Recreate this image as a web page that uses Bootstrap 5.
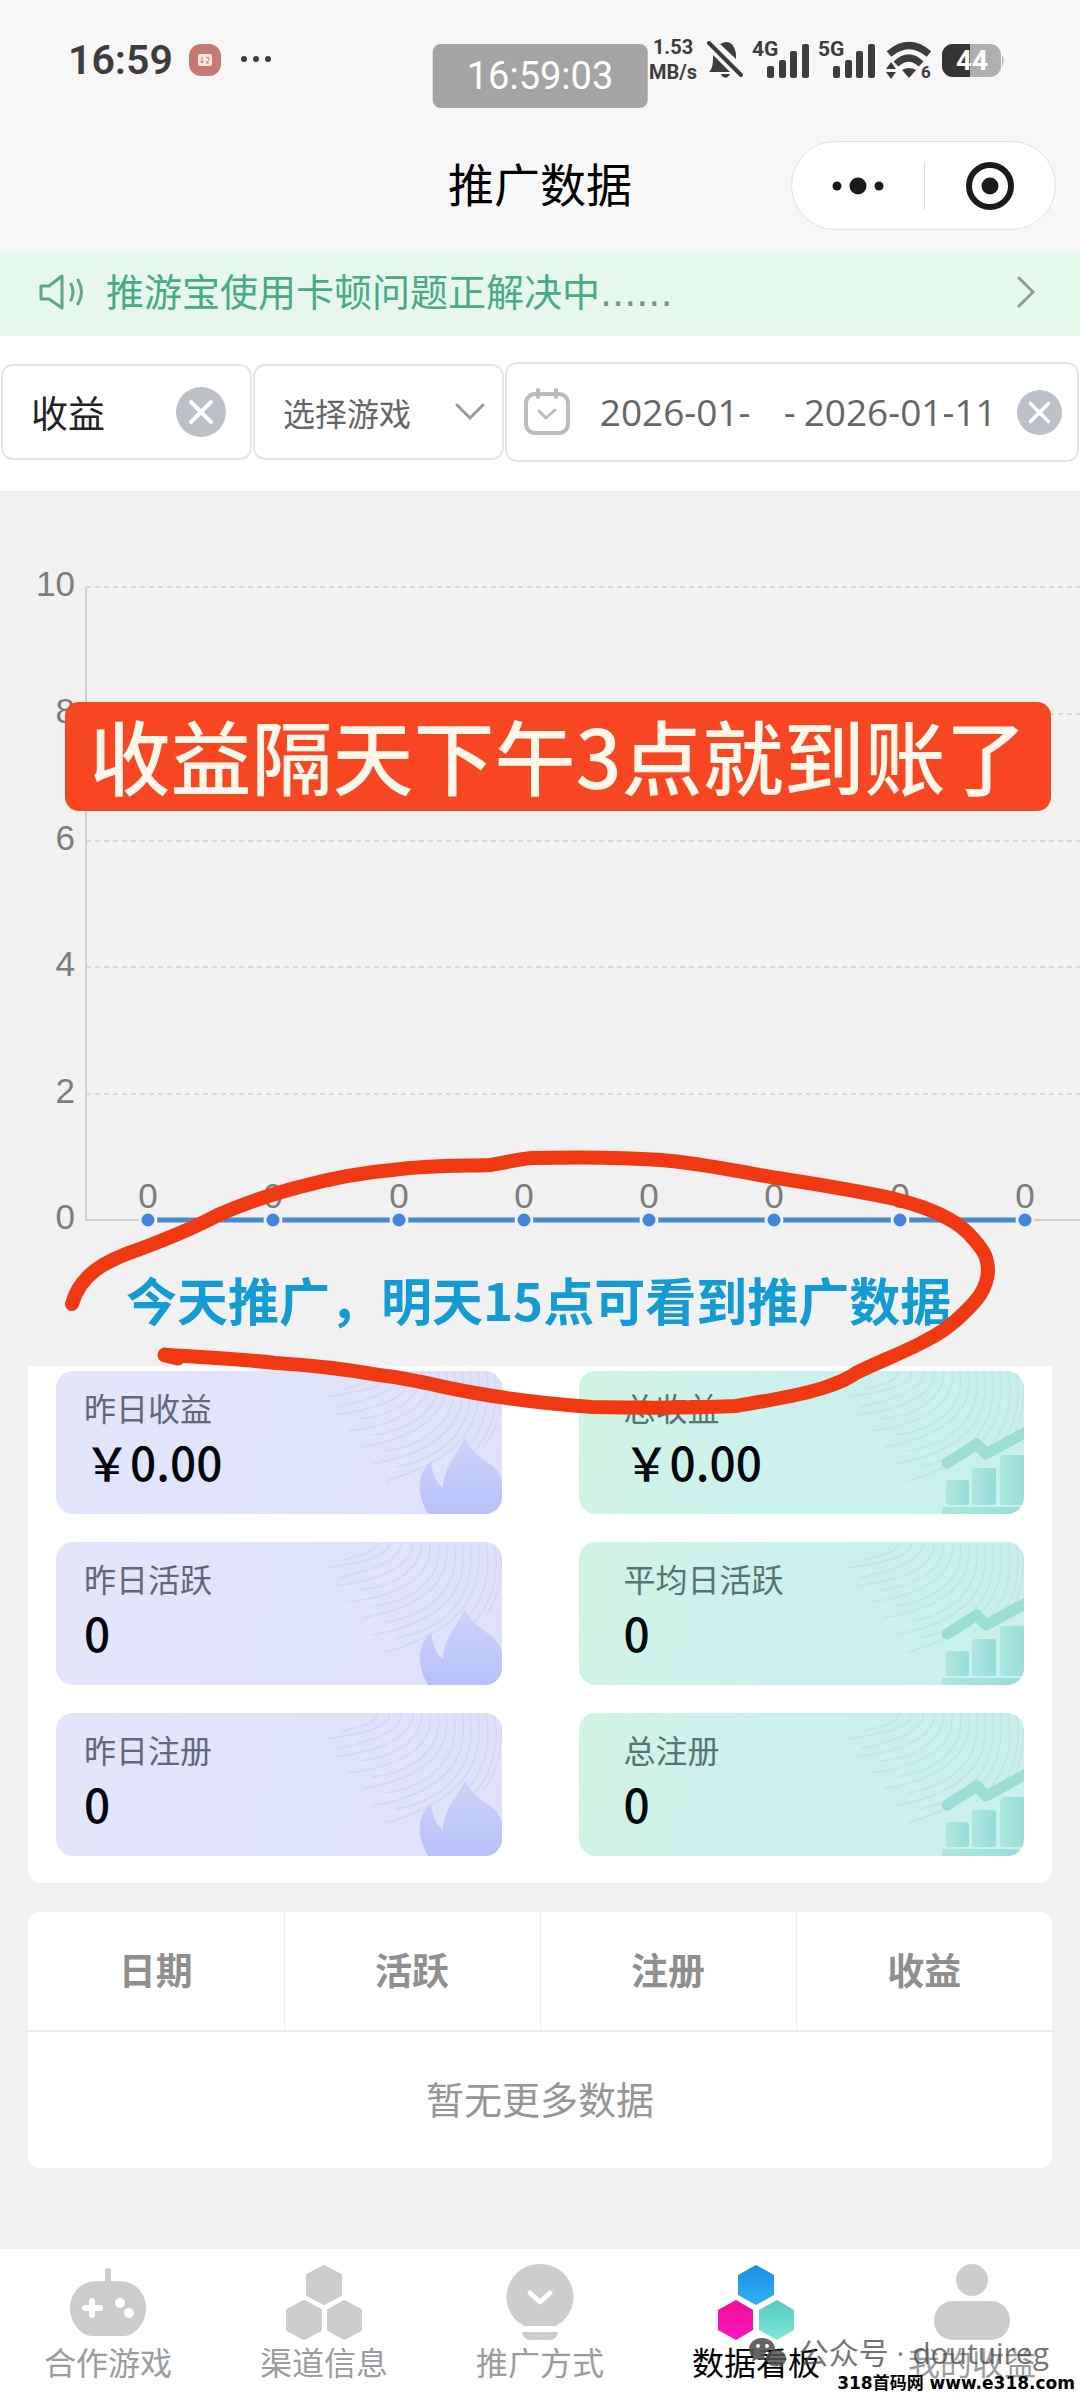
<!DOCTYPE html>
<html lang="zh-CN">
<head>
<meta charset="utf-8">
<meta name="viewport" content="width=device-width, initial-scale=1">
<title>推广数据</title>
<link href="https://cdn.jsdelivr.net/npm/bootstrap@5.3.0/dist/css/bootstrap.min.css" rel="stylesheet">
<style>
  body { background: #f1f1f1; font-family: "Noto Sans CJK SC", sans-serif; color: #000; }
  svg { display: block; flex: none; }
  .top-area { background: #f7f7f7; height: 249px; }
  .status-row { height: 120px; padding: 0 75px 0 68px; color: #3d3d3d; font-family: Roboto, sans-serif; }
  .status-row svg { overflow: visible; }
  .status-time { font-size: 41px; line-height: 48px; font-weight: 600; }
  .net-speed { font-size: 20px; line-height: 25px; font-weight: 700; }
  .clock-pill { top: 44px; height: 64px; padding: 0 34px; background: #a4a4a4; border-radius: 8px; color: #fff; font-family: Roboto, sans-serif; font-size: 38px; line-height: 64px; }
  .title-row { height: 130px; padding-bottom: 6px; }
  .page-title { font-size: 46px; line-height: 56px; font-weight: 400; }
  .capsule { width: 265px; height: 89px; right: 24px; top: 21px; background: #fff; border: 1px solid #e2e2e2; }
  .capsule button, .plain-btn { background: none; border: 0; padding: 0; }
  .capsule-line { width: 1px; height: 48px; background: #ddd; }
  .notice-row { height: 87px; padding: 0 44px 2px 38px; background: #e8f7ed; color: #46ab86; font-size: 38px; line-height: 48px; text-decoration: none; gap: 22px; }
  .notice-dots { font-family: "DejaVu Sans", sans-serif; color: #6f9a88; }
  .filter-row { height: 155px; background: #fff; gap: 1px; padding: 0 1px 3px; }
  .filter-box { flex: 1 1 23%; min-width: 0; height: 96px; border: 2px solid #e5e5e5; border-radius: 12px; background: #fff; }
  .filter-range { flex: 1 1 53%; height: 100px; padding: 0 15px 0 17px; font-family: "Open Sans", sans-serif; font-size: 37px; color: #666; }
  .filter-box input, .filter-box select { border: 0; background: none; padding: 0; min-width: 0; outline: 0; appearance: none; line-height: 48px; color: inherit; }
  .type-box { font-size: 37px; color: #222; }
  .game-box { font-size: 32px; color: #666; }
  .date-from { flex: 0 1 184px; margin-left: 30px; }
  .date-to { flex: 1 1 200px; }
  .date-dash { padding-right: 8px; }
  .axis-label { font: 35px "Liberation Sans", sans-serif; fill: #7d7d7d; }
  .chart-banner { left: 65px; right: 29px; top: 211px; height: 109px; background: #f74622; border-radius: 14px; color: #fff6ea; font-size: 81px; line-height: 104px; font-weight: 500; }
  .chart-note { height: 126px; padding-left: 126px; color: #149bd3; font-size: 51px; line-height: 118px; font-weight: 700; }
  .scribble { left: 0; top: 0; pointer-events: none; z-index: 2; }
  .stats-panel { margin: 0 28px; padding: 5px 28px 27px; border-radius: 0 0 14px 14px; column-gap: 77px; row-gap: 28px; grid-template-columns: 1fr 1fr; }
  .stat-tile { height: 143px; border-radius: 17px; overflow: hidden; background: linear-gradient(100deg, #e3e5fb, #dfe3fa 60%, #dfe1fb); padding: 14px 28px 0; }
  .stat-tile.green { background: linear-gradient(100deg, #d0f4e2, #cbf1ee 45%, #c8f0ec); padding-left: 45px; }
  .stat-name { font-size: 32px; line-height: 44px; color: #62677a; }
  .green .stat-name { color: #55766f; }
  .stat-value { font-size: 46px; line-height: 64px; font-weight: 500; color: #05060c; }
  .stat-art { right: 0; top: 0; }
  .data-panel { margin: 29px 28px 0; border-radius: 12px; overflow: hidden; }
  .data-table { table-layout: fixed; margin: 0; }
  .data-table th { height: 119px; padding: 0 0 4px; vertical-align: middle; font-size: 37px; line-height: 48px; font-weight: 600; color: #8f8f8f; border-bottom: 2px solid #ececec; }
  .data-table th + th { border-left: 1px solid #ececec; }
  .data-table td { height: 137px; padding: 0 0 4px; font-size: 38px; line-height: 48px; color: #969696; border: 0; }
  .tab-row { height: 151px; padding-top: 15px; background: #fff; }
  .tab-item { flex: 1 1 0; color: #9a9d9f; font-size: 32px; line-height: 42px; text-decoration: none; }
  .tab-item.current { color: #000; }
  .wm-account { right: 31px; top: 83px; color: rgba(70,70,70,.75); font-family: "Open Sans", "Noto Sans CJK SC", sans-serif; font-size: 30px; line-height: 42px; gap: 12px; }
  .wm-site { right: 5px; bottom: 5px; font-family: "DejaVu Sans", "Noto Sans CJK SC", sans-serif; font-size: 17px; line-height: 24px; font-weight: 700; color: #000; }
</style>
<script src="https://cdn.jsdelivr.net/npm/bootstrap@5.3.0/dist/js/bootstrap.bundle.min.js"></script>
</head>
<body>
<svg width="0" height="0" class="position-absolute" aria-hidden="true">
  <defs>
    <linearGradient id="flameFill" x1="0" y1="0" x2="0" y2="1"><stop offset="0" stop-color="#cdd2f8"/><stop offset="1" stop-color="#b9c0fa"/></linearGradient>
    <linearGradient id="barFill" x1="0" y1="0" x2="1" y2="0"><stop offset="0" stop-color="#ade7dc"/><stop offset="1" stop-color="#95ddda"/></linearGradient>
    <linearGradient id="hexBlue" x1="0" y1="0" x2="0" y2="1"><stop offset="0" stop-color="#1d8be6"/><stop offset="1" stop-color="#2fb2f4"/></linearGradient>
    <linearGradient id="hexPink" x1="0" y1="0" x2="0" y2="1"><stop offset="0" stop-color="#ee0d92"/><stop offset="1" stop-color="#fb18c4"/></linearGradient>
    <linearGradient id="hexTeal" x1="0" y1="0" x2="0" y2="1"><stop offset="0" stop-color="#52c9c3"/><stop offset="1" stop-color="#83e8d5"/></linearGradient>
    <symbol id="contours" viewBox="0 0 190 142">
      <g fill="none" stroke-width="1.5">
        <path d="M66 0C62 12 46 14 30 18"/>
        <path d="M78 0C76 16 52 20 14 26"/>
        <path d="M90 0C88 20 62 27 26 36"/>
        <path d="M101 0C100 24 70 38 22 44"/>
        <path d="M110 0C110 28 80 46 46 48"/>
        <path d="M118 0C122 32 90 54 36 60"/>
        <path d="M126 0C132 38 98 60 60 64"/>
        <path d="M134 0C141 44 106 66 50 76"/>
        <path d="M142 0C150 48 114 74 74 80"/>
        <path d="M150 0C159 54 122 82 60 93"/>
        <path d="M158 0C166 58 130 88 84 96"/>
        <path d="M166 0C174 58 142 90 74 110"/>
        <path d="M174 0C183 46 160 76 140 90"/>
        <path d="M182 0C190 40 174 70 158 84"/>
        <path d="M189 12C190 44 184 60 172 76"/>
      </g>
    </symbol>
    <symbol id="flameArt" viewBox="0 0 190 143">
      <use href="#contours" width="190" height="142" stroke="#cfd3ee" opacity=".75"/>
      <path fill="url(#flameFill)" d="M116 143C106 126 103 105 119 90C120 102 124 112 131 117C132 96 143 88 153 67C158 80 170 87 178 93C188 100 192 110 190 122V143Z"/>
    </symbol>
    <symbol id="growthArt" viewBox="0 0 190 143">
      <use href="#contours" width="190" height="142" stroke="#b9e0dd" opacity=".6"/>
      <g fill="url(#barFill)">
        <rect x="112" y="109" width="23" height="25" rx="3"/><rect x="138" y="97" width="24" height="37" rx="3"/><rect x="166" y="84" width="26" height="50" rx="4"/>
        <rect x="108" y="136" width="84" height="8"/>
      </g>
      <path d="M113 92L143 73L152 83L192 61" fill="none" stroke="#9bdcd5" stroke-width="11" stroke-linecap="round" stroke-linejoin="round"/>
    </symbol>
    <symbol id="clearIcon" viewBox="0 0 50 50"><circle cx="25" cy="25" r="25" fill="#bbc1c7"/><path d="M15 15L35 35M35 15L15 35" stroke="#fff" stroke-width="4" stroke-linecap="round"/></symbol>
    <symbol id="signalBars" viewBox="0 0 42 34"><rect x="0" y="22" width="7" height="12" rx="2"/><rect x="12" y="16" width="7" height="18" rx="2"/><rect x="23" y="7" width="7" height="27" rx="2"/><rect x="35" y="0" width="7" height="34" rx="2"/></symbol>
  </defs>
</svg>

<main class="d-flex flex-column min-vh-100 position-relative overflow-hidden">
  <header class="top-area position-relative">
    <div class="status-row d-flex align-items-center justify-content-between">
      <div class="d-flex align-items-center">
        <span class="status-time">16:59</span>
        <svg class="ms-3" width="84" height="34" viewBox="0 0 84 34">
          <rect x="0" y="1" width="32" height="32" rx="12" fill="#c67a74"/><rect x="9" y="11" width="14" height="12" rx="2" fill="#fbe6dc"/>
          <path d="M13 14v6M11.500 18l1.500 2l1.500-2M17 14.500h3v2.500l-3 3h3" fill="none" stroke="#b08a80" stroke-width="1"/>
          <g fill="#3d3d3d"><circle cx="55" cy="16" r="3"/><circle cx="67" cy="16" r="3"/><circle cx="79" cy="16" r="3"/></g>
        </svg>
      </div>
      <div class="d-flex align-items-center gap-2">
        <div class="net-speed text-center">1.53<br>MB/s</div>
        <svg width="40" height="40" viewBox="0 0 40 40" fill="#3d3d3d">
          <path d="M14 5C24-3 32 6 31 19L15 4ZM8 15L25 32H4C8 28 8 23 8 15Z"/><path d="M16 34h9c-2 5-7 5-9 0Z"/><path d="M4 3L36 35" stroke="#3d3d3d" stroke-width="4" stroke-linecap="round"/>
        </svg>
        <svg width="58" height="40" viewBox="0 0 58 40" fill="#3d3d3d"><text x="-1" y="16" font-size="21" font-weight="700">4G</text><use href="#signalBars" x="14" y="4" width="42" height="34"/></svg>
        <svg width="58" height="40" viewBox="0 0 58 40" fill="#3d3d3d"><text x="-1" y="16" font-size="21" font-weight="700">5G</text><use href="#signalBars" x="14" y="4" width="42" height="34"/></svg>
        <svg width="48" height="40" viewBox="0 0 48 40" fill="#3d3d3d">
          <path d="M4 14Q24-3 44 14M11 24Q24 12 36 24" fill="none" stroke="#3d3d3d" stroke-width="7"/><path d="M17 30q7-4 14 0l-7 8Z"/>
          <path d="M1 29l5-7l5 7ZM1 32h10l-5 7Z"/><text x="36" y="38" font-size="17" font-weight="700">6</text>
        </svg>
        <svg width="64" height="40" viewBox="0 0 64 40">
          <rect x="1" y="4" width="59" height="33" rx="11" fill="#afafaf"/><path d="M12 4H29V37H12A11 11 0 0 1 1 26V15A11 11 0 0 1 12 4Z" fill="#353535"/><path d="M61 15q3 5 0 12Z" fill="#afafaf"/>
          <text x="31" y="30" font-size="28" font-weight="700" text-anchor="middle" fill="#fff">44</text>
        </svg>
      </div>
    </div>
    <div class="clock-pill position-absolute start-50 translate-middle-x">16:59:03</div>
    <div class="title-row position-relative d-flex align-items-center justify-content-center">
      <h1 class="page-title m-0">推广数据</h1>
      <div class="capsule position-absolute rounded-pill d-flex align-items-center">
        <button class="flex-fill d-flex justify-content-center" aria-label="更多"><svg width="52" height="20" viewBox="0 0 52 20" fill="#1b1b1b"><circle cx="5" cy="10" r="4.500"/><circle cx="26" cy="10" r="8.500"/><circle cx="47" cy="10" r="4.500"/></svg></button>
        <span class="capsule-line"></span>
        <button class="flex-fill d-flex justify-content-center" aria-label="关闭"><svg width="50" height="50" viewBox="0 0 50 50"><circle cx="25" cy="25" r="21" fill="none" stroke="#1b1b1b" stroke-width="6"/><circle cx="25" cy="25" r="8.500" fill="#1b1b1b"/></svg></button>
      </div>
    </div>
  </header>

  <a href="#" class="notice-row d-flex align-items-center">
    <svg width="46" height="40" viewBox="0 0 46 40" fill="none" stroke="#5fa68a" stroke-width="3" stroke-linejoin="round" stroke-linecap="round">
      <path d="M3 14H11L24 4V36L11 27H3Z"/><path d="M33 12Q37 20 33 28M40 8Q47 20 40 32"/>
    </svg>
    <span class="flex-fill">推游宝使用卡顿问题正解决中<span class="notice-dots">......</span></span>
    <svg width="20" height="32" viewBox="0 0 20 32" fill="none" stroke="#8c9f93" stroke-width="3" stroke-linecap="round"><path d="M3 2L17 16L3 30"/></svg>
  </a>

  <form class="filter-row d-flex align-items-center">
    <div class="filter-box type-box d-flex align-items-center justify-content-between ps-4 pe-4">
      <input class="w-50 ms-1" type="text" aria-label="类型" value="收益">
      <button type="button" class="plain-btn" aria-label="清除类型"><svg width="50" height="50"><use href="#clearIcon"/></svg></button>
    </div>
    <div class="filter-box game-box d-flex align-items-center ps-4 pe-3">
      <select class="w-100 ms-1" aria-label="选择游戏"><option>选择游戏</option></select>
      <svg width="32" height="20" viewBox="0 0 32 20" fill="none" stroke="#999" stroke-width="3" stroke-linecap="round"><path d="M3 3L16 16L29 3"/></svg>
    </div>
    <div class="filter-box filter-range d-flex align-items-center">
      <svg width="46" height="48" viewBox="0 0 46 48" fill="none" stroke="#bcbcb8" stroke-width="4" stroke-linecap="round" stroke-linejoin="round"><rect x="2" y="6" width="42" height="39" rx="9"/><path d="M14 2V9M32 2V9"/><path d="M15 23L22 30L31 22" stroke-width="3"/></svg>
      <input class="date-from" type="text" aria-label="开始日期" value="2026-01-">
      <span class="date-dash">-</span>
      <input class="date-to" type="text" aria-label="结束日期" value="2026-01-11">
      <button type="button" class="plain-btn" aria-label="清除日期"><svg width="45" height="45"><use href="#clearIcon"/></svg></button>
    </div>
  </form>

  <section class="position-relative">
    <svg class="w-100 h-auto" viewBox="0 0 1080 749" role="img" aria-label="收益折线图">
      <g stroke="#d9d6d6" stroke-width="2" stroke-dasharray="5 4"><path d="M86 96H1080M86 223H1080M86 350H1080M86 476H1080M86 603H1080"/></g>
      <path d="M86 96V729H1080" fill="none" stroke="#d0cece" stroke-width="2"/>
      <g class="axis-label" text-anchor="end"><text x="75" y="105">10</text><text x="75" y="232">8</text><text x="75" y="359">6</text><text x="75" y="485">4</text><text x="75" y="612">2</text><text x="75" y="738">0</text></g>
      <path d="M148 729H1025" stroke="#4b88d4" stroke-width="5"/>
      <g fill="#4585d8" stroke="#eef2f8" stroke-width="3"><circle cx="148" cy="729" r="8"/><circle cx="273" cy="729" r="8"/><circle cx="399" cy="729" r="8"/><circle cx="524" cy="729" r="8"/><circle cx="649" cy="729" r="8"/><circle cx="774" cy="729" r="8"/><circle cx="900" cy="729" r="8"/><circle cx="1025" cy="729" r="8"/></g>
      <g class="axis-label" text-anchor="middle"><text x="148" y="717">0</text><text x="273" y="717">0</text><text x="399" y="717">0</text><text x="524" y="717">0</text><text x="649" y="717">0</text><text x="774" y="717">0</text><text x="900" y="717">0</text><text x="1025" y="717">0</text></g>
    </svg>
    <div class="chart-banner position-absolute text-center text-nowrap">收益隔天下午3点就到账了</div>
    <div class="chart-note text-nowrap">今天推广，明天15点可看到推广数据</div>
    <svg class="scribble position-absolute w-100 h-auto" viewBox="0 0 1080 940" aria-hidden="true">
      <path fill="none" stroke="#f03813" stroke-width="14" stroke-linecap="round" stroke-linejoin="round" d="M72 813C80 784 104 770 140 758C172 746 192 738 218 724C258 706 330 684 392 679C430 674 460 675 490 674C506 672 516 668 532 667C575 666 620 666 661 669C700 672 735 680 771 686C815 693 855 699 895 708C930 717 953 727 968 742C983 758 988 765 988 780C987 800 974 812 964 822C952 834 940 843 923 851C905 861 880 870 856 882C848 888 840 891 826 896C800 905 765 910 736 915C690 917 640 917 592 916C550 913 515 909 475 902C440 896 415 888 379 884C345 878 310 874 275 872C240 868 205 866 167 864"/>
      <path d="M165 864L178 867" stroke="#f03813" stroke-width="15" stroke-linecap="round"/>
    </svg>
  </section>

  <section class="stats-panel d-grid bg-white">
    <div class="stat-tile position-relative"><svg class="stat-art position-absolute" width="190" height="143"><use href="#flameArt"/></svg><div class="stat-name">昨日收益</div><div class="stat-value">￥0.00</div></div>
    <div class="stat-tile green position-relative"><svg class="stat-art position-absolute" width="190" height="143"><use href="#growthArt"/></svg><div class="stat-name">总收益</div><div class="stat-value">￥0.00</div></div>
    <div class="stat-tile position-relative"><svg class="stat-art position-absolute" width="190" height="143"><use href="#flameArt"/></svg><div class="stat-name">昨日活跃</div><div class="stat-value">0</div></div>
    <div class="stat-tile green position-relative"><svg class="stat-art position-absolute" width="190" height="143"><use href="#growthArt"/></svg><div class="stat-name">平均日活跃</div><div class="stat-value">0</div></div>
    <div class="stat-tile position-relative"><svg class="stat-art position-absolute" width="190" height="143"><use href="#flameArt"/></svg><div class="stat-name">昨日注册</div><div class="stat-value">0</div></div>
    <div class="stat-tile green position-relative"><svg class="stat-art position-absolute" width="190" height="143"><use href="#growthArt"/></svg><div class="stat-name">总注册</div><div class="stat-value">0</div></div>
  </section>

  <section class="data-panel bg-white">
    <table class="data-table table text-center align-middle">
      <thead><tr><th scope="col">日期</th><th scope="col">活跃</th><th scope="col">注册</th><th scope="col">收益</th></tr></thead>
      <tbody><tr><td colspan="4">暂无更多数据</td></tr></tbody>
    </table>
  </section>

  <nav class="tab-row d-flex mt-auto position-relative">
    <a href="#" class="tab-item d-flex flex-column align-items-center">
      <svg width="76" height="76" viewBox="0 0 76 76" fill="#ccc"><path d="M35 20V7a3 3 0 0 1 6 0V20Z"/><path d="M27 17H49C66 17 76 30 76 44C76 60 64 72 54 72H22C12 72 0 60 0 44C0 30 10 17 27 17Z"/><path d="M22 37V51M15 44H30" stroke="#fff" stroke-width="6" stroke-linecap="round"/><circle cx="50" cy="39" r="5" fill="#fff"/><circle cx="59" cy="49" r="5" fill="#fff"/></svg>
      <span>合作游戏</span></a>
    <a href="#" class="tab-item d-flex flex-column align-items-center">
      <svg width="76" height="76" viewBox="0 0 76 76" fill="#ccc" stroke="#ccc" stroke-width="2" stroke-linejoin="round"><path d="M38 2L55 11V31L38 40L21 31V11Z"/><path d="M18 37L35 46V66L18 75L1 66V46Z"/><path d="M58 37L75 46V66L58 75L42 66V46Z"/></svg>
      <span>渠道信息</span></a>
    <a href="#" class="tab-item d-flex flex-column align-items-center">
      <svg width="76" height="76" viewBox="0 0 76 76" fill="#ccc"><path d="M38 0A33 33 0 0 1 60 58Q56 60 54 62H22Q20 60 16 58A33 33 0 0 1 38 0Z"/><path d="M20 68H56Q54 76 48 76H28Q22 76 20 68Z"/><path d="M28 29L38 38L48 29" fill="none" stroke="#fff" stroke-width="5" stroke-linecap="round" stroke-linejoin="round"/></svg>
      <span>推广方式</span></a>
    <a href="#" class="tab-item current d-flex flex-column align-items-center" aria-current="page">
      <svg width="76" height="76" viewBox="0 0 76 76"><path fill="url(#hexBlue)" d="M38 1L56 11V31L38 41L20 31V11Z"/><path fill="url(#hexPink)" d="M18 36L35 46V66L18 76L0 66V46Z"/><path fill="url(#hexTeal)" d="M59 36L76 46V66L59 76L41 66V46Z"/></svg>
      <span>数据看板</span></a>
    <a href="#" class="tab-item d-flex flex-column align-items-center">
      <svg width="76" height="76" viewBox="0 0 76 76" fill="#ccc"><circle cx="38" cy="16" r="16"/><rect x="0" y="37" width="76" height="39" rx="19"/></svg>
      <span>我的收益</span></a>
    <div class="wm-account position-absolute d-flex align-items-center text-nowrap">
      <svg width="38" height="30" viewBox="0 0 38 30"><path fill="#555" opacity=".9" d="M13 0C21 0 26 5 26 11C18 11 14 16 16 22Q10 22 8 21L3 24L4 19C-4 12 1 0 13 0Z"/><path fill="#555" opacity=".85" d="M27 12C34 12 38 17 37 21Q37 25 33 27L34 30L30 28C22 30 17 25 17 20C17 16 21 12 27 12Z"/><g fill="#fff"><circle cx="9" cy="8" r="2"/><circle cx="18" cy="8" r="2"/></g></svg>
      <span>公众号 · doutuireg</span>
    </div>
    <div class="wm-site position-absolute text-nowrap">318首码网 www.e318.com</div>
  </nav>
</main>
</body>
</html>
